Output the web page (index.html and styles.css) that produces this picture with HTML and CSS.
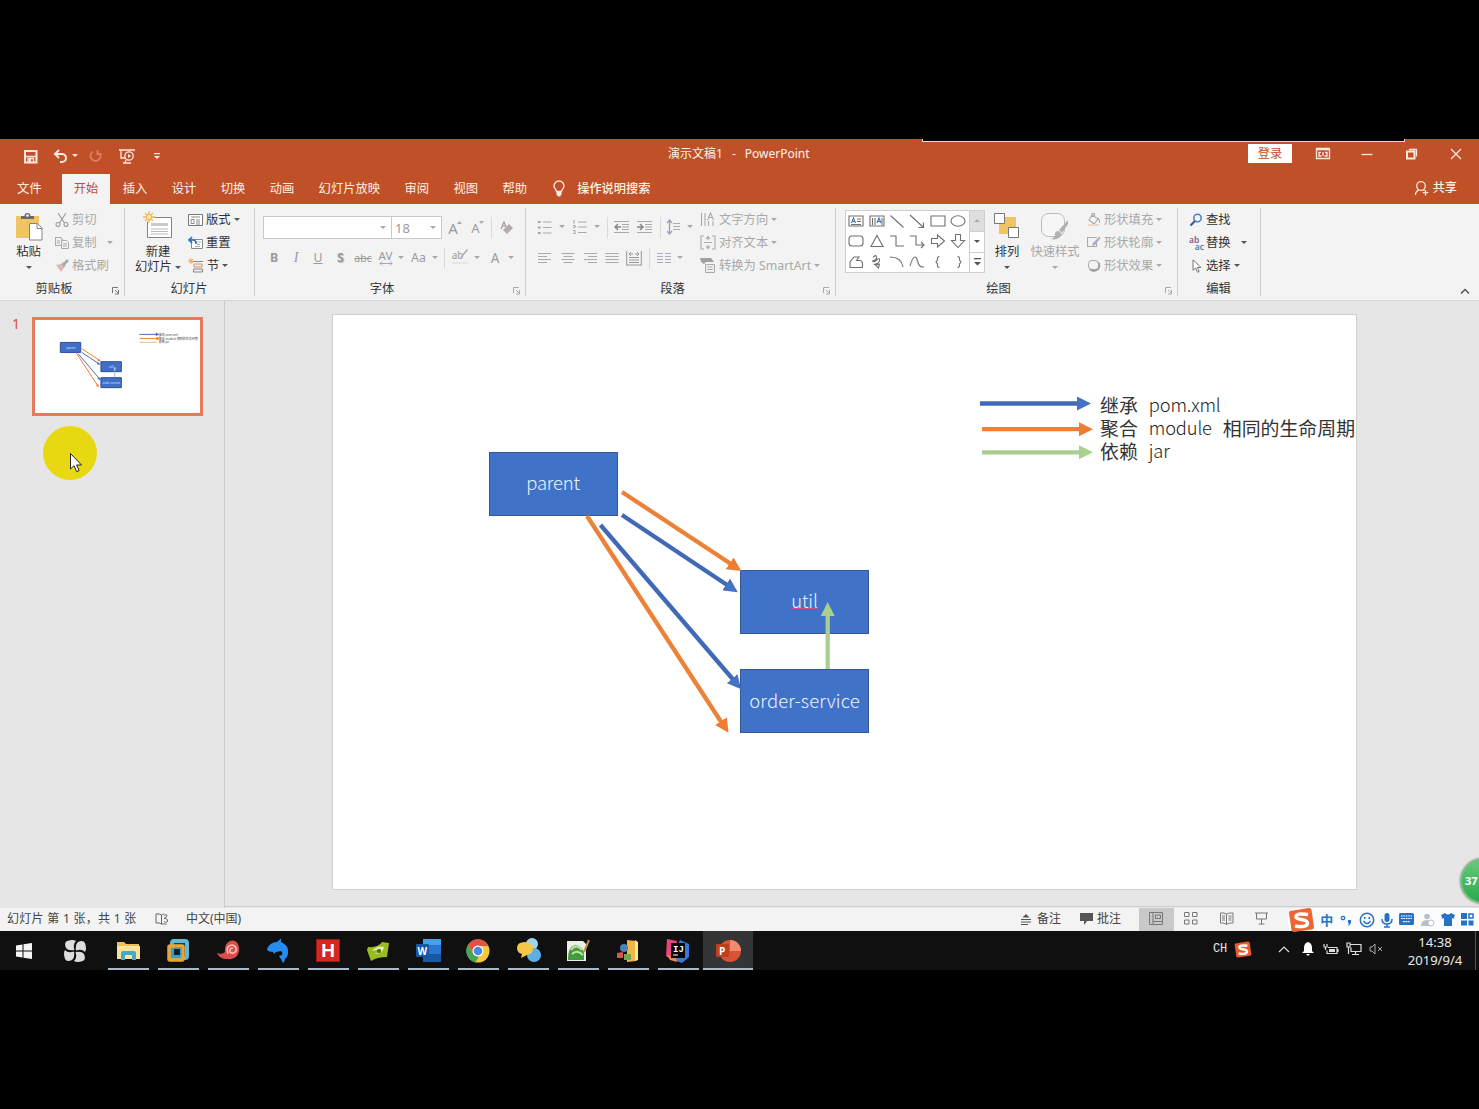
FILE: index.html
```html
<!DOCTYPE html>
<html lang="zh-CN">
<head>
<meta charset="utf-8">
<title>演示文稿1 - PowerPoint</title>
<link rel="stylesheet" href="styles.css">
</head>
<body>
<main class="screen">
<header class="titlebar">
  <div class="quick">
    <svg class="q-save" width="15" height="15" viewBox="0 0 15 15"><path d="M2 2h11.500v11.500H2z" class="tl2"/><path d="M2 7.500h11M5 13V9.500h5.500V13" class="tl"/><path d="M6 10h2v3H6z" fill="#fde9e1"/></svg>
    <svg class="q-undo" width="15" height="15" viewBox="0 0 15 15"><path d="M2 5h7a4 4 0 0 1 0 8H7M6 1L2 5l4 4" class="tl2"/></svg>
    <svg class="caret light" width="6" height="4"><path d="M0 0h6L3 3z"/></svg>
    <svg class="q-redo" width="14" height="14" viewBox="0 0 14 14"><path d="M4 2.500a5 5 0 1 0 7 2M8.500 1v4H12.500" fill="none" stroke="#dc8260" stroke-width="1.800"/></svg>
    <svg class="q-show" width="16" height="16" viewBox="0 0 16 16"><path d="M0 2h16M2 2v8h4M4 15h8M7 12l-1 3" class="tl"/><circle cx="10" cy="8" r="4.200" class="tl"/><path d="M9 6l3 2-3 2z" fill="#fde9e1"/></svg>
    <svg class="q-more" width="6" height="7"><path d="M0 0h6v1.200H0zM0 3h6L3 6z" fill="#fde9e1"/></svg>
  </div>
  <div class="doc"><span>演示文稿1</span><span>-</span><span>PowerPoint</span></div>
  <div class="window-tools">
    <span class="login">登录</span>
    <svg width="16" height="14" viewBox="0 0 16 14"><path d="M1.500 1.500h13v10h-13zM1.500 2.700h13" class="tl"/><path d="M6.500 9H4V5.500h2M9.500 9H12V5.500h-2M8 5v4" class="tl"/></svg>
    <svg width="16" height="14" viewBox="0 0 16 14"><path d="M2.500 7.500h11" class="tl"/></svg>
    <svg width="16" height="14" viewBox="0 0 16 14"><path d="M3 4.500h7.500v7H3z" class="tl2"/><path d="M5 2.500h7.500v7" class="tl"/></svg>
    <svg width="16" height="14" viewBox="0 0 16 14"><path d="M3 2l10 10M13 2L3 12" class="tl"/></svg>
  </div>
  <i class="capture-edge"></i>
</header>
<nav class="tabs">
  <span class="file">文件</span><span class="active">开始</span><span>插入</span><span>设计</span><span>切换</span><span>动画</span><span>幻灯片放映</span><span>审阅</span><span>视图</span><span>帮助</span>
  <svg class="bulb" width="14" height="18" viewBox="0 0 14 18"><path d="M4.500 11.500C4.500 9.500 2 8.500 2 6a5 5 0 0 1 10 0c0 2.500-2.500 3.500-2.500 5.500z" class="tl"/><path d="M4.500 12h5v2.500L8 16.500H6L4.500 14.500z" fill="#fde9e1"/></svg>
  <b class="search">操作说明搜索</b>
  <div class="share"><svg width="15" height="16" viewBox="0 0 15 16"><circle cx="7" cy="6" r="4.300" class="tl"/><path d="M1.500 15c0-3 1.500-4.500 3.500-5.200M9 9.800l1.500.7M11.500 10v5.500M8.700 12.700h5.600" class="tl"/></svg><b>共享</b></div>
</nav>
<section class="ribbon">
  <div class="group clipboard">
    <div class="body">
      <div class="big">
        <svg width="28" height="29" viewBox="0 0 28 29"><path d="M1 4h23v22H1z" fill="#f0c465"/><path d="M6 7V4h3.500a3 3 0 0 1 6 0H19v3z" fill="#6b6b6b"/><circle cx="12.500" cy="3.600" r="1.300" fill="#f3f3f3"/><path d="M14.500 11.500h8l4.500 4.500v12H14.500z" fill="#fff" stroke="#858585"/><path d="M22 12v4.500h5" fill="none" stroke="#858585"/></svg>
        <span>粘贴</span><svg class="caret" width="6" height="4"><path d="M0 0h6L3 3z"/></svg>
      </div>
      <div class="stack off">
        <div><svg width="14" height="14" viewBox="0 0 14 14"><path d="M3 0l6.500 10M11 0L4.500 10" class="g dk"/><circle cx="3" cy="11.500" r="2" class="g dk"/><circle cx="11" cy="11.500" r="2" class="g dk"/></svg><span>剪切</span></div>
        <div><svg width="14" height="14" viewBox="0 0 14 14"><path d="M.5 1.500h5l2 2v6h-7z" class="g"/><path d="M6.500 4.500h5l2 2v6h-7z" fill="#f3f3f3" stroke="#aaa"/><path d="M8 8h4M8 10h4M2 5h3M2 7h3" class="g"/></svg><span>复制</span><svg class="caret far" width="6" height="4"><path d="M0 0h6L3 3z"/></svg></div>
        <div><svg width="14" height="14" viewBox="0 0 14 14"><path d="M1 6l5-1 3 4-3 4z" fill="#d9b9bd"/><path d="M6 5l3-2 3-3 2 2-3 3-2 4z" fill="#aaa"/></svg><span>格式刷</span></div>
      </div>
    </div>
    <footer><span>剪贴板</span><svg class="launch dark" width="8" height="8"><path d="M.5 6V.5H6M3 3l3 3M6.500 3v4H3"/></svg></footer>
  </div>
  <div class="group slides">
    <div class="body">
      <div class="big">
        <svg width="30" height="29" viewBox="0 0 30 29"><path d="M4.500 6.500h24v20h-24z" fill="#fff" stroke="#858585"/><path d="M8 12h17v3H8z" fill="#c9c9c9"/><path d="M8 18h17M8 20.500h17M8 23h17" stroke="#bbb"/><circle cx="6" cy="6" r="5" fill="#f3f3f3"/><path d="M6 0v12M0 6h12M2 2l8 8M10 2l-8 8" stroke="#edbc50" stroke-width="1.300"/><circle cx="6" cy="6" r="2.500" fill="#fff0bd" stroke="#e8b342"/></svg>
        <span>新建</span><span class="with-caret">幻灯片<svg class="caret" width="6" height="4"><path d="M0 0h6L3 3z"/></svg></span>
      </div>
      <div class="stack">
        <div><svg width="15" height="14" viewBox="0 0 15 14"><path d="M.5 1.500h14v11H.5z" fill="#fff" stroke="#777"/><path d="M3 4h9M3 6.500h3v4H3zM8 7h4M8 9h4M8 11h4" fill="none" stroke="#888"/></svg><span>版式</span><svg class="caret" width="6" height="4"><path d="M0 0h6L3 3z"/></svg></div>
        <div><svg width="15" height="14" viewBox="0 0 15 14"><path d="M3.500 3.500h11v9h-11z" fill="#fff" stroke="#888"/><path d="M9 6h4M9 8.500h3M7 10.500h5" stroke="#aaa"/><path d="M1 4h4a3 3 0 0 1 3 3v1M4 1L1 4l3 3" fill="none" stroke="#2c72b8" stroke-width="1.700"/></svg><span>重置</span></div>
        <div><svg width="16" height="15" viewBox="0 0 16 15"><path d="M5 3.500h10" stroke="#888"/><path d="M6 6h8v3H6z" fill="#eee" stroke="#d79262"/><path d="M5.500 11h9v3h-9z" fill="#eee" stroke="#888"/><path d="M3 0v6M0 3h6M1 1l4 4M5 1L1 5" stroke="#efaa58"/></svg><span>节</span><svg class="caret" width="6" height="4"><path d="M0 0h6L3 3z"/></svg></div>
      </div>
    </div>
    <footer><span>幻灯片</span></footer>
  </div>
  <div class="group fonts">
    <div class="body col">
      <div class="font-row one">
        <div class="combo"><svg class="caret off" width="6" height="4"><path d="M0 0h6L3 3z"/></svg></div>
        <div class="combo size"><span>18</span><svg class="caret off" width="6" height="4"><path d="M0 0h6L3 3z"/></svg></div>
        <span class="grow">A<svg width="5" height="3"><path d="M0 3h5L2.500 0z"/></svg></span><span class="grow shrink">A<svg width="5" height="3"><path d="M0 0h5L2.500 3z"/></svg></span><i class="bar"></i>
        <svg width="14" height="14" viewBox="0 0 14 14"><path d="M1 8l3-7 2 5M2 5h3" class="g dk"/><path d="M3 9l6-6 4 4-6 6z" fill="#b4abae"/></svg>
      </div>
      <div class="font-row two">
        <b>B</b><em>I</em><u>U</u><b class="shadow">S</b><s>abc</s>
        <span class="av">AV<svg width="14" height="5"><path d="M1 2.500h12M3 .5l-2 2 2 2M11 .5l2 2-2 2" fill="none" stroke="#a3a7b8"/></svg></span><svg class="caret off" width="6" height="4"><path d="M0 0h6L3 3z"/></svg>
        <span>Aa</span><svg class="caret off" width="6" height="4"><path d="M0 0h6L3 3z"/></svg><i class="bar"></i>
        <span class="mark">ab<svg width="9" height="10"><path d="M8 0L3 6 1 9l3-2 5-6z" fill="#aaa"/></svg></span><svg class="caret off" width="6" height="4"><path d="M0 0h6L3 3z"/></svg><span class="color">A</span><svg class="caret off" width="6" height="4"><path d="M0 0h6L3 3z"/></svg>
      </div>
    </div>
    <footer><span>字体</span><svg class="launch" width="8" height="8"><path d="M.5 6V.5H6M3 3l3 3M6.500 3v4H3"/></svg></footer>
  </div>
  <div class="group para">
    <div class="body">
      <div class="para-tools">
        <div class="p-row one">
          <svg width="14" height="14"><path d="M5 2h8.500M5 7.500h8.500M5 13h8.500" class="g"/><path d="M0 1h2.500v2H0zM0 6.500h2.500v2H0zM0 12h2.500v2H0z" fill="#9aa2ba"/></svg><svg class="caret off" width="6" height="4"><path d="M0 0h6L3 3z"/></svg>
          <svg width="14" height="16"><path d="M5 3h8.500M5 8h8.500M5 13.500h8.500M1 1v3.500M0 6.500h2v2H0M0 11.500h2v3H0" class="g"/></svg><svg class="caret off" width="6" height="4"><path d="M0 0h6L3 3z"/></svg><i class="bar"></i>
          <svg width="15" height="14"><path d="M0 1.500h15M8 4.500h7M8 7h7M8 9.500h7M0 12.500h15" class="g"/><path d="M7 7H1M4 4L1 7l3 3" fill="none" stroke="#888" stroke-width="1.500"/></svg>
          <svg width="15" height="14"><path d="M0 1.500h15M8 4.500h7M8 7h7M8 9.500h7M0 12.500h15" class="g"/><path d="M0 7h6M3 4l3 3-3 3" fill="none" stroke="#888" stroke-width="1.500"/></svg><i class="bar"></i>
          <svg width="14" height="16"><path d="M6 4.500h7M6 7.500h7M6 10.500h7" class="g"/><path d="M2.500 1v14M0 4l2.500-3L5 4M0 12l2.500 3L5 12" fill="none" stroke="#9aa0b5" stroke-width="1.300"/></svg><svg class="caret off" width="6" height="4"><path d="M0 0h6L3 3z"/></svg>
        </div>
        <div class="p-row two">
          <svg width="14" height="12"><path d="M0 1.500h13M0 4.500h9M0 7.500h13M0 10.500h9" class="g"/></svg><svg width="14" height="12"><path d="M.5 1.500h13M2.500 4.500h9M.5 7.500h13M2.500 10.500h9" class="g"/></svg><svg width="14" height="12"><path d="M1 1.500h13M5 4.500h9M1 7.500h13M5 10.500h9" class="g"/></svg><svg width="14" height="12"><path d="M.5 1.500h13M.5 4.500h13M.5 7.500h13M.5 10.500h13" class="g"/></svg>
          <svg width="16" height="15"><path d="M.7 0v14M15.300 0v14M0 14h16M3 6.500h10M3 9h10M3 11.500h10M3 3h4M5 1L3 3l2 2M13 3H9M11 1l2 2-2 2" fill="none" stroke="#999"/></svg><i class="bar"></i>
          <svg width="14" height="12"><path d="M0 1.500h6M8 1.500h6M0 4.500h6M8 4.500h6M0 7.500h6M8 7.500h6M0 10.500h6M8 10.500h6" fill="none" stroke="#a5abc0"/></svg><svg class="caret off" width="6" height="4"><path d="M0 0h6L3 3z"/></svg>
        </div>
      </div>
      <div class="stack off">
        <div><svg width="16" height="15" viewBox="0 0 16 15"><path d="M1.500 1v13M5 1v13M8.500 9v5M13 9v5M7.500 8L10.500 1l3 7M9 5.500h3.500" class="g"/></svg><span>文字方向</span><svg class="caret" width="6" height="4"><path d="M0 0h6L3 3z"/></svg></div>
        <div><svg width="16" height="15" viewBox="0 0 16 15"><path d="M4 1H1v13h3M12 1h3v13h-3M4 7.500h8M8 2v3M8 10v3M6 4l2-2.500L10 4M6 11l2 2.500L10 11" class="g"/></svg><span>对齐文本</span><svg class="caret" width="6" height="4"><path d="M0 0h6L3 3z"/></svg></div>
        <div><svg width="16" height="15" viewBox="0 0 16 15"><path d="M0 0h11l3 4H6L4 6 1 4z" fill="#a0a0a0"/><path d="M5.500 6.500h9v8h-9zM7.500 9h5M7.500 11.500h5" fill="#eee" stroke="#aaa"/></svg><span>转换为 SmartArt</span><svg class="caret" width="6" height="4"><path d="M0 0h6L3 3z"/></svg></div>
      </div>
    </div>
    <footer><span>段落</span><svg class="launch" width="8" height="8"><path d="M.5 6V.5H6M3 3l3 3M6.500 3v4H3"/></svg></footer>
  </div>
  <div class="group drawing">
    <div class="body">
      <div class="gallery">
        <div class="shapes">
          <svg viewBox="0 0 16 16"><path d="M1 3h14v10H1z"/><path d="M3.500 10l2-5 2 5M4.300 8.500h2.500" stroke="#4770b5"/><path d="M9 6h4M9 8.500h4M3 11.500h10"/></svg>
          <svg viewBox="0 0 16 16"><path d="M1 3h14v10H1z"/><path d="M8 10l2-5 2 5M8.800 8.500h2.500" stroke="#4770b5"/><path d="M3.500 5v7M6 5v7M13 5v7"/></svg>
          <svg viewBox="0 0 16 16"><path d="M1.500 2.500l13 12"/></svg>
          <svg viewBox="0 0 16 16"><path d="M1 2l13 12M14.500 9.500V14.500H9.500"/></svg>
          <svg viewBox="0 0 16 16"><path d="M1 3h14v10H1z"/></svg>
          <svg viewBox="0 0 16 16"><ellipse cx="8" cy="8" rx="7" ry="5.200"/></svg>
          <svg viewBox="0 0 16 16"><rect x="1" y="3" width="14" height="10" rx="3"/></svg>
          <svg viewBox="0 0 16 16"><path d="M8 2.500L14 13.500H2z"/></svg>
          <svg viewBox="0 0 16 16"><path d="M1 3h6v10h8"/></svg>
          <svg viewBox="0 0 16 16"><path d="M1 3h6v9h8M12 9l3 3-3 3"/></svg>
          <svg viewBox="0 0 16 16"><path d="M1.500 5.500h6V2L14.500 8l-7 6v-3.500h-6z"/></svg>
          <svg viewBox="0 0 16 16"><path d="M5.500 1.500h5v6h4L8 14.500 1.500 7.500h4z"/></svg>
          <svg viewBox="0 0 16 16"><path d="M2 13.500V8l4-5h5L8.500 6.500h3a3 3 0 0 1 3 3v4z"/></svg>
          <svg viewBox="0 0 16 16"><path d="M4 3.500Q7 0 7.500 3T3.500 7q1 2 4-1t3 0-4 4 4 0M10.500 10l-4 1 3 3z"/></svg>
          <svg viewBox="0 0 16 16"><path d="M1 3c8 0 12 4 13 10"/></svg>
          <svg viewBox="0 0 16 16"><path d="M1 12C4 1 7 1 8.500 7S12 13 15 13"/></svg>
          <svg viewBox="0 0 16 16"><path d="M9.500 2.500Q7 2.500 7.500 6L6 8l1.500 2Q7 13.500 9.500 13.500"/></svg>
          <svg viewBox="0 0 16 16"><path d="M7.500 2.500Q10 2.500 9.500 6L11 8 9.500 10Q10 13.500 7.500 13.500"/></svg>
        </div>
        <div class="scroll"><span><svg class="caret off" width="6" height="4"><path d="M0 3h6L3 0z"/></svg></span><span><svg class="caret" width="6" height="4"><path d="M0 0h6L3 3z"/></svg></span><span><svg width="7" height="8"><path d="M0 0h7v1.300H0zM0 4h7L3.500 7.500z" fill="#555"/></svg></span></div>
      </div>
      <div class="big arrange"><svg width="28" height="29" viewBox="0 0 28 29"><path d="M6 5h17v17H6z" fill="#f0c465"/><path d="M1.500 1.500h10v10h-10zM15.500 15.500h10v10h-10z" fill="#fff" stroke="#777"/></svg><span>排列</span><svg class="caret" width="6" height="4"><path d="M0 0h6L3 3z"/></svg></div>
      <div class="big styles off"><svg width="30" height="29" viewBox="0 0 30 29"><rect x="1.500" y="1.500" width="23" height="23" rx="7" fill="#f6f6f6" stroke="#bbb"/><path d="M28 8l-9 10 3 3 6-9zM19 19q-5 0-4 5-1 2-4 3 8 2 11-5z" fill="#b2b2b2"/></svg><span>快速样式</span><svg class="caret" width="6" height="4"><path d="M0 0h6L3 3z"/></svg></div>
      <div class="stack off">
        <div><svg width="14" height="15" viewBox="0 0 14 15"><path d="M5 3l6 4-4 5-5-4zM5 5V1.500h2.500V4M11 6q2 2 1.500 5" class="g"/><path d="M1 13h11" stroke="#ead8ca" stroke-width="2"/></svg><span>形状填充</span><svg class="caret" width="6" height="4"><path d="M0 0h6L3 3z"/></svg></div>
        <div><svg width="14" height="15" viewBox="0 0 14 15"><path d="M10 2.500H.5v9h9V8" class="g"/><path d="M12.500 1.500L6 8l-1 3 3-1 5.500-7z" fill="#a5adc4"/></svg><span>形状轮廓</span><svg class="caret" width="6" height="4"><path d="M0 0h6L3 3z"/></svg></div>
        <div><svg width="14" height="15" viewBox="0 0 14 15"><path d="M2 11q2 4 8 2 4-2 3-8l-2-1v7z" fill="#999"/><rect x="1.500" y="2.500" width="10" height="9" rx="3.500" fill="#f4f4f4" stroke="#aaa"/></svg><span>形状效果</span><svg class="caret" width="6" height="4"><path d="M0 0h6L3 3z"/></svg></div>
      </div>
    </div>
    <footer><span>绘图</span><svg class="launch" width="8" height="8"><path d="M.5 6V.5H6M3 3l3 3M6.500 3v4H3"/></svg></footer>
  </div>
  <div class="group edit">
    <div class="body"><div class="stack">
      <div><svg width="14" height="14" viewBox="0 0 14 14"><circle cx="8.500" cy="5" r="3.700" fill="none" stroke="#4b7fc0" stroke-width="1.500"/><path d="M6 8l-4.500 4.500" stroke="#35598f" stroke-width="2"/></svg><span>查找</span></div>
      <div><span class="abac"><i>ab</i><i>ac</i></span><span>替换</span><svg class="caret" width="6" height="4"><path d="M0 0h6L3 3z"/></svg></div>
      <div><svg width="14" height="14" viewBox="0 0 14 14"><path d="M4 .8v10.500l2.500-2.300 2 4.300 1.700-.8-2-4H12z" fill="#fff" stroke="#777"/></svg><span>选择</span><svg class="caret" width="6" height="4"><path d="M0 0h6L3 3z"/></svg></div>
    </div></div>
    <footer><span>编辑</span></footer>
  </div>
  <svg class="collapse" width="10" height="6"><path d="M1 5.500L5 1.500l4 4" fill="none" stroke="#555" stroke-width="1.500"/></svg>
</section>
<section class="workspace">
  <aside class="thumbs">
    <span class="number">1</span>
    <svg class="thumb" viewBox="0 0 1024 576" preserveAspectRatio="none">
      <path d="M0 0h1024v576H0z" fill="#fff"/>
      <g fill="#3f6fc6" stroke="#2b4f95" stroke-width="6"><path d="M157 139h127v62H157zM409 258h127v62H409zM409 357h127v62H409z"/></g>
      <g fill="none" stroke-width="6"><path d="M291 201l112 74M269 210l138 162M648 89h105" stroke="#4169b5"/><path d="M291 178l115 76M255 202l140 213M650 115h106" stroke="#ed7d31"/><path d="M495 355v-62" stroke="#9fb7d6"/><path d="M650 138h106" stroke="#d8c47a"/></g>
      <g fill="#4169b5"><path d="M750 77l20 12-20 12zM403 277l-20-3 9-14zM407 373l-20-9 14-9z"/></g><path d="M408 257l-20-3 9-14zM396 417l-18-12 14-9zM754 103l20 12-20 12z" fill="#ed7d31"/><path d="M495 290l8 16h-16z" fill="#b9cce6"/>
      <g class="mini-text"><text x="195" y="177">parent</text><text x="460" y="296">util</text><text x="418" y="395">order-service</text></g>
      <g class="mini-legend"><text x="768" y="97">继承  pom.xml</text><text x="768" y="121">聚合  module  相同的生命周期</text><text x="768" y="144">依赖  jar</text></g>
    </svg>
    <i class="halo"></i>
    <svg class="pointer" width="14" height="21" viewBox="0 0 14 21"><path d="M1.500 1.500v15.500l3.500-3.300 2.700 6 2.500-1.200-2.700-5.500h5z" fill="#fff" stroke="#222"/></svg>
  </aside>
  <div class="stage">
    <div class="slide">
      <div class="node parent">parent</div><div class="node util"><span>util</span></div><div class="node order">order-service</div>
      <svg class="arrows" width="1023" height="574" viewBox="0 0 1023 574">
        <defs>
          <marker id="mb" markerUnits="userSpaceOnUse" markerWidth="14" markerHeight="14" refX="13" refY="7" orient="auto"><path d="M0 0l14 7-14 7z" fill="#4472c4"/></marker>
          <marker id="mo" markerUnits="userSpaceOnUse" markerWidth="14" markerHeight="14" refX="13" refY="7" orient="auto"><path d="M0 0l14 7-14 7z" fill="#ee7d31"/></marker>
          <marker id="mg" markerUnits="userSpaceOnUse" markerWidth="14" markerHeight="14" refX="13" refY="7" orient="auto"><path d="M0 0l14 7-14 7z" fill="#a9d18e"/></marker>
        </defs>
        <g fill="none" stroke-width="4.300">
          <g stroke="#4169b5"><path d="M289 200l107 71.300"/><path d="M267.500 210l133 155"/><path d="M647 88.500h101"/></g>
          <g stroke="#ed8137"><path d="M289 177l109 72"/><path d="M254 201l135.500 208"/><path d="M649 114.200h101"/></g>
          <g stroke="#a9cf90"><path d="M494.700 354v-54"/><path d="M649 137.300h101"/></g>
        </g>
        <g fill="none" stroke="none">
          <g><path d="M289 200l115 76.700" marker-end="url(#mb)"/><path d="M267.500 210l140 163.500" marker-end="url(#mb)"/><path d="M647 88.500h110" marker-end="url(#mb)"/></g>
          <g><path d="M289 177l118.500 78.500" marker-end="url(#mo)"/><path d="M254 201l141 216" marker-end="url(#mo)"/><path d="M649 114.200h110" marker-end="url(#mo)"/></g>
          <g><path d="M494.700 354v-66" marker-end="url(#mg)"/><path d="M649 137.300h110" marker-end="url(#mg)"/></g>
        </g>
      </svg>
      <div class="legend"><div><span>继承</span><span class="en">pom.xml</span></div><div><span>聚合</span><span class="en">module</span><span>相同的生命周期</span></div><div><span>依赖</span><span class="en">jar</span></div></div>
    </div>
  </div>
  <div class="ball">37</div>
</section>
<footer class="status">
  <span class="count">幻灯片 第 1 张，共 1 张</span>
  <svg class="book" width="14" height="12" viewBox="0 0 14 12"><path d="M6.500 2Q4 .3 1 1v9q3-.7 5.500 1zM6.500 2Q8 1 9 1M6.500 11h5M9 2.500q3-2 3 0T9 5.500q4 0 3.500 2.500T9 8.500" fill="none" stroke="#666"/></svg>
  <span class="lang">中文(中国)</span>
  <div class="status-right">
    <svg width="12" height="12"><path d="M1 6.500h10M1 9h10M1 11.500h7" stroke="#555"/><path d="M2.500 4.500L6 1l3.500 3.500z" fill="#555"/></svg><span>备注</span>
    <svg class="note" width="13" height="12"><path d="M0 0h13v8H7l-3 4V8H0z" fill="#555"/></svg><span>批注</span>
    <div class="view on"><svg width="14" height="13"><path d="M.5.500h13v12H.5zM4 .5v12M4 9.500h9.500M6.500 3h5v3.500h-5z" class="s"/></svg></div>
    <div class="view"><svg width="14" height="13"><path d="M.5.500h4.500v4H.5zM8.500.500H13v4H8.500zM.5 8h4.500v4H.5zM8.500 8H13v4H8.500z" class="s"/></svg></div>
    <div class="view"><svg width="14" height="13"><path d="M6.500 2Q4 .5.500 1v10q3.500-.5 6 1.500Q9 10.500 13 11V1Q9 .5 6.500 2v10M2 4h3M2 6h3M2 8h3M8.500 4h3M8.500 6h3M8.500 8h3" class="s"/></svg></div>
    <div class="view"><svg width="14" height="13"><path d="M0 1h13M1.500 1v6h10V1M6.500 7v5M3.500 12h6" class="s"/></svg></div>
  </div>
  <div class="ime">
    <svg width="27" height="26" viewBox="0 0 27 26"><path d="M2 4L21 1q2 0 2.500 2L26 20q0 2-2 2.500L6 25q-2 0-2.500-2L1 6q0-1.500 1-2z" fill="#ec6633"/><path d="M20 7.500Q8 5.500 8 10c0 3.500 11.500 1.500 11.500 6 0 4-6.500 4-12.500 3" fill="none" stroke="#fff" stroke-width="3.500"/></svg>
    <b>中</b>
    <svg width="13" height="14"><circle cx="3" cy="5" r="1.700" fill="none" stroke="#2672c7" stroke-width="1.300"/><path d="M8 7h3v3l-2 2.500H8L9 10H8z" fill="#2672c7"/></svg>
    <svg width="16" height="16"><circle cx="8" cy="8" r="6.700" class="i"/><path d="M4.500 9q3.500 5 7 0" class="i"/><path d="M5 5h1.500v2H5zM9.500 5H11v2H9.500z" fill="#2672c7"/></svg>
    <svg width="12" height="16"><rect x="3.500" y="1" width="5" height="9" rx="2.500" fill="#2672c7"/><path d="M1 7q0 5 5 5t5-5M6 12v3M3 15h6" class="i"/></svg>
    <svg width="15" height="13"><rect width="15" height="12" rx="1.500" fill="#2672c7"/><path d="M2 3h11M2 5.500h11M4 8.700h7" stroke="#fff" stroke-width="1.200" stroke-dasharray="1.700 .7"/></svg>
    <svg width="14" height="14"><circle cx="6" cy="3.500" r="2.800" fill="#b9bfcd"/><path d="M0 13q0-6 6-6 3 0 4 2v4z" fill="#b9bfcd"/><circle cx="10" cy="10" r="3" fill="#fff" stroke="#b9bfcd"/></svg>
    <svg width="14" height="14"><path d="M0 2l4-2q3 3 6 0l4 2-1.500 4L11 5v8H3V5L1.500 6z" fill="#2672c7"/></svg>
    <svg width="13" height="13"><path d="M0 0h6v6H0zM0 7.500h6v5H0zM7.500 7.500h5v5h-5z" fill="#2672c7"/><path d="M8 1h4v4H8z" class="i"/></svg>
  </div>
</footer>
<section class="taskbar">
  <div class="app start"><svg width="16" height="16"><path d="M0 2.500l6.500-1V7.500H0zM7.500 1.300L16 0v7.500H7.500zM0 8.500h6.500v6L0 13.500zM7.500 8.500H16V16l-8.500-1.300z" fill="#f5f5f5"/></svg></div>
  <div class="app pin"><svg width="22" height="22" viewBox="0 0 22 22"><g fill="#ddd"><path d="M10.500 10Q4 11 2 8-.5 2 4 .7q5-1.500 8 .3Q8.500 4 10.500 10z"/><path d="M12 10.500Q11 4 14 2q6-2.500 7.300 2 1.500 5-.3 8Q18 8.500 12 10.500z"/><path d="M11.500 12Q18 11 20 14q2.500 6-2 7.300-5 1.500-8-.3Q13.500 18 11.500 12z"/><path d="M10 11.500Q11 18 8 20q-6 2.500-7.300-2-1.500-5 .3-8Q4 13.500 10 11.500z"/></g></svg></div>
  <div class="app run"><svg width="23" height="20" viewBox="0 0 23 20"><path d="M0 1h7l2 2h13v15H0z" fill="#e9bf59"/><path d="M0 5h23v13H0z" fill="#fae29c"/><path d="M4 19v-7q0-2 2-2h11q2 0 2 2v7h-4v-5H8v5z" fill="#49a6c9"/></svg></div>
  <div class="app run"><svg width="24" height="24" viewBox="0 0 24 24"><rect x="6" y="2" width="15" height="17" rx="2" fill="#173c4b" stroke="#62b9d4" stroke-width="4"/><rect x="3" y="7" width="14" height="14" rx="1" fill="none" stroke="#eca52d" stroke-width="3.500"/><path d="M5 9h10v10H5z" fill="#3a9fc0"/><path d="M8 10h6v6H8z" fill="#10202a"/></svg></div>
  <div class="app run"><svg width="24" height="22" viewBox="0 0 24 22"><path d="M1 13q5 2 8-1-1-8 5-11 7-2 9 6c1 9-5 13-12 12-5 0-8-2-10-6z" fill="#d94d4b"/><path d="M12 14q-3-8 4-9 5 1 4 6-3 4-6 1-1-4 3-4" fill="none" stroke="#ffc3b7" stroke-width="1.600"/></svg></div>
  <div class="app run"><svg width="24" height="25" viewBox="0 0 24 25"><path d="M1 11Q4 4 11 4l4-3.500V4q8 3 7 12-1 4-3 5 0 2-2 4l-2-4-2-3 3-1q1-3-1-4l-5 1-2 2-1-2q-4 0-6-2z" fill="#258df1"/></svg></div>
  <div class="app run"><span class="h-app">H</span></div>
  <div class="app run"><svg width="23" height="20" viewBox="0 0 23 20"><path d="M1 6q10 1 14-5l7 1-2 14q-10 0-16 4L0 9z" fill="#99bd20"/><path d="M5 10q5-6 12-4-1 7-10 7 5-1 7-5" fill="#e2efad"/><circle cx="12" cy="10" r="2" fill="#486b11"/></svg></div>
  <div class="app run"><svg width="25" height="23" viewBox="0 0 25 23"><path d="M7 0h18v23H7z" fill="#2a75ce"/><path d="M7 0h18v6H7z" fill="#43a2e8"/><path d="M7 15h18v8H7z" fill="#1956a6"/><rect y="5" width="13" height="13" rx="1" fill="#1857a9"/><text x="1.500" y="15.500" class="office">W</text></svg></div>
  <div class="app run"><svg width="24" height="24" viewBox="0 0 24 24"><circle cx="12" cy="12" r="11.500" fill="#f4c83b"/><path d="M2 6A11.500 11.500 0 0 1 22.500 7H12l-5 7z" fill="#e05244"/><path d="M2 6l6 10 5 1-3.500 6.300A11.500 11.500 0 0 1 2 6z" fill="#45a55a"/><circle cx="12" cy="12" r="5.500" fill="#fff"/><circle cx="12" cy="12" r="4.300" fill="#4b87de"/></svg></div>
  <div class="app run"><svg width="25" height="25" viewBox="0 0 25 25"><circle cx="16" cy="6" r="6" fill="#9dd5ee"/><circle cx="18" cy="17" r="7" fill="#5cb0e7"/><path d="M1 10q0-6 8-6t8 6-6 7l-6 3 1-4q-5-1-5-6z" fill="#f3c749"/></svg></div>
  <div class="app run"><svg width="24" height="24" viewBox="0 0 24 24"><path d="M1 2h16l3 3v17H1z" fill="#eaf0e5"/><path d="M2 20q0-13 8-14 7 2 8 8v7H2z" fill="#439b3e"/><path d="M5 11q5-7 11 0M6 15q5-5 11 1" fill="none" stroke="#bfe3a1" stroke-width="2"/><path d="M23 1l-5 12" stroke="#c98f46" stroke-width="2"/></svg></div>
  <div class="app run"><svg width="24" height="24" viewBox="0 0 24 24"><path d="M11 1l9 1v20l-9 1z" fill="#efb547"/><path d="M19 1l3 2v18l-3 1z" fill="#fbe799"/><circle cx="8" cy="9" r="4" fill="#4d82b8"/><path d="M1 14l6-1v6H1z" fill="#d05b4d"/><path d="M8 15h7v6H8z" fill="#6eaa51"/></svg></div>
  <div class="app run"><svg width="25" height="25" viewBox="0 0 25 25"><path d="M1 1l10 2-3 20-8-5z" fill="#e74679"/><path d="M14 2l9 4v13l-7 6-11-4z" fill="#3978df"/><path d="M1 17l9 2 1 5-7-2z" fill="#ed854a"/><path d="M5 5h14v15H5z" fill="#080808"/><text x="7" y="14" class="ij">IJ</text><path d="M7 17h5" stroke="#fff"/></svg></div>
  <div class="app run current"><svg width="25" height="24" viewBox="0 0 25 24"><circle cx="14" cy="12" r="11" fill="#d95332"/><path d="M14 1a11 11 0 0 1 11 11H14z" fill="#f08b6d"/><rect y="5" width="13" height="13" rx="1" fill="#bd3e20"/><text x="3" y="15.500" class="office">P</text></svg></div>
  <div class="tray">
    <span class="ch">CH</span><svg width="18" height="19" viewBox="0 0 27 26"><path d="M2 4L21 1q2 0 2.500 2L26 20q0 2-2 2.500L6 25q-2 0-2.500-2L1 6q0-1.500 1-2z" fill="#ec5b27"/><path d="M20 7.500Q8 5.500 8 10c0 3.500 11.500 1.500 11.500 6 0 4-6.500 4-12.500 3" fill="none" stroke="#fff" stroke-width="3.700"/></svg>
    <svg class="up" width="12" height="8"><path d="M1 7l5-5 5 5" class="w"/></svg>
    <svg class="bell" width="12" height="14"><path d="M6 0Q10 1 10 6v3l2 2H0l2-2V6Q2 1 6 0zM4 12h4l-2 2z" fill="#fff"/></svg>
    <svg class="battery" width="16" height="13"><path d="M5 4.500h9v6H4v-3M15 6v3M1 1v3h3V1M2.500 4v3" class="w"/><path d="M6 6h6v3H6z" fill="#ddd"/></svg>
    <svg class="net" width="16" height="14"><path d="M4 2.500h11v7H5v-4M6 12.500h7M9.500 10v2M1 1v4h3V1zM2.500 5v7" class="w"/></svg>
    <svg class="mute" width="15" height="12"><path d="M1 4h2l3-3v10L3 8H1zM9 4l4 4M13 4L9 8" fill="none" stroke="#aaa"/></svg>
    <div class="clock"><span>14:38</span><span>2019/9/4</span></div><i class="peek"></i>
  </div>
</section>
</main>
</body>
</html>
```
FILE: styles.css
```css
* { box-sizing: border-box; }
body { margin: 0; background: #000; }
svg { display: block; flex: none; }
i { font-style: normal; }
.screen { width: 1479px; height: 1109px; padding-top: 139px; overflow: hidden; background: #000; font: 12.3px/16px "Noto Sans", "Noto Sans CJK SC", sans-serif; color: #333; }
.tl { fill: none; stroke: #fde9e1; stroke-width: 1.3; }
.tl2 { fill: none; stroke: #fde9e1; stroke-width: 2; }
.g { fill: none; stroke: #aaa; stroke-width: 1.1; }
.g.dk { stroke: #999; }
.s { fill: none; stroke: #777; }
.i { fill: none; stroke: #2672c7; stroke-width: 1.5; }
.w { fill: none; stroke: #ddd; stroke-width: 1.2; }
.caret { fill: #555; }
.caret.light { fill: #fde9e1; }
.caret.off, .off .caret { fill: #aaa; }

.titlebar { position: relative; display: grid; grid-template-columns: 668px 1fr 231px; height: 34px; background: #c05028; color: #fff0e9; }
.quick { display: flex; align-items: center; padding-left: 23px; }
.q-undo { margin-left: 15px; }
.quick .light { margin-left: 4px; }
.q-redo { margin-left: 11px; }
.q-show { margin-left: 16px; }
.q-more { margin-left: 19px; }
.doc { display: flex; gap: 9px; padding-top: 7px; font-size: 12px; }
.window-tools { display: flex; align-items: flex-start; gap: 28.500px; padding-top: 8px; }
.login { width: 44px; height: 19px; margin: -3px -6px 0 0; background: #fff; color: #c05028; text-align: center; line-height: 19px; }
.capture-edge { position: absolute; left: 922px; top: 0; width: 483px; height: 3px; background: #000; border: solid #ddd; border-width: 0 1px 1px; }

.tabs { display: flex; height: 31px; background: #c05028; color: #fff0e9; line-height: 31px; }
.tabs > span { padding: 0 12.200px; }
.tabs > .file { width: 61.500px; padding-left: 17px; }
.tabs > .active { background: #f3f3f3; color: #c05028; height: 31px; margin-top: 1px; line-height: 29px; }
.bulb { margin: 7px 11px 0 13px; }
.tabs b { font-weight: 500; font-size: 12.200px; }
.share { display: flex; gap: 4px; margin-left: auto; padding-right: 22px; line-height: 29px; }
.share svg { margin-top: 7px; }

.ribbon { display: flex; height: 97px; background: #f3f3f3; border-bottom: 1px solid #d6d6d6; }
.group { position: relative; display: flex; flex-direction: column; flex: none; }
.group::after { content: ""; align-self: flex-end; width: 1px; height: 88px; margin: -93px 0 0; background: #cfcfcf; }
.clipboard { width: 125px; }
.slides { width: 130px; }
.fonts { width: 271px; }
.para { width: 310px; }
.drawing { width: 342px; }
.edit { width: 83px; }
.body { display: flex; height: 73px; padding-top: 4px; flex: none; }
.body.col { flex-direction: column; }
.group > footer { display: flex; height: 24px; flex: none; line-height: 24px; }
.group > footer span { flex: 1; text-align: center; padding-right: 4px; }
.group.slides > footer span, .group.edit > footer span { padding-right: 2px; }
.launch { margin: 10px 5px 0 0; fill: none; stroke: #aaa; }
.launch.dark { stroke: #777; }
.big { display: flex; flex-direction: column; align-items: center; padding-top: 4px; }
.big > svg:first-child { margin-bottom: 3px; }
.big .caret { margin-top: 6px; }
.clipboard .big { width: 46px; margin-left: 6px; padding-right: 1px; }
.slides .big { width: 60px; padding-top: 3px; margin-left: 3px; }
.slides .big svg + span { margin: 1px 0 -1px; }
.with-caret { display: flex; gap: 3px; width: 46px; }
.with-caret .caret { margin-top: 7px; }
.stack > div { display: flex; align-items: center; height: 23px; white-space: nowrap; }
.stack > div > svg:first-child { margin-right: 3px; }
.stack .caret { margin-left: 3px; }
.off { color: #a9a9a9; }
.clipboard .stack { margin-left: 3px; }
.clipboard .stack .far { margin-left: 10px; }
.font-row { display: grid; align-items: center; justify-items: center; color: #9b9b9b; }
.font-row.one { height: 22px; margin: 8px 0 0 8px; grid-template-columns: 129px 50px 26px 19px 9px 21px; }
.combo { display: flex; align-items: center; justify-content: flex-end; width: 100%; height: 23px; padding-right: 5px; background: #fff; border: 1px solid #c9c9c9; }
.combo.size { justify-content: space-between; padding-left: 3px; border-left: 0; font-size: 13px; }
.grow { display: flex; font-size: 15px; }
.grow svg { fill: #aaa; margin-top: 1px; margin-left: -1px; }
.shrink { font-size: 13px; }
.bar { width: 1px; height: 21px; background: #dadada; }
.font-row.two { height: 30px; margin: 5px 0 0 8px; grid-template-columns: 22px 22px 22px 23px 22px 23px 8px 27px 5px 15px 16px 18px 18px 14px; }
.two em { font-family: "Liberation Serif", serif; font-size: 14px; }
.two s { font-size: 10.500px; }
.two .shadow { text-shadow: 1px 1px 1px #bbb; }
.av { display: flex; flex-direction: column; align-items: center; font-size: 11.500px; line-height: 11px; }
.mark { display: flex; font-size: 10px; margin-top: -4px; border-bottom: 2px solid #e6e6e6; line-height: 13px; }
.mark svg { margin-left: -4px; }
.color { font-size: 13.500px; }
.para-tools { width: 160px; margin-left: 10px; }
.p-row { display: grid; align-items: center; justify-items: center; }
.p-row.one { height: 22px; margin-top: 8px; grid-template-columns: 18px 16px 19px 16px 5px 23px 23px 8px 20px 12px; }
.p-row.two { height: 30px; margin-top: 5px; grid-template-columns: 18px 27px 18px 25px 20px 11px 18px 14px; }
.para .stack { margin-left: 4px; }
.gallery { display: flex; width: 140px; height: 63px; margin: 2px 0 0 9px; border: 1px solid #cfcfcf; background: #fff; }
.shapes { display: grid; grid-template-columns: repeat(6, 20.400px); grid-template-rows: repeat(3, 20.300px); width: 123px; place-items: center; }
.shapes svg { width: 16px; height: 16px; fill: none; stroke: #707070; stroke-width: 1.1; }
.scroll { display: grid; grid-template-rows: repeat(3, 1fr); width: 15px; flex: 1; border-left: 1px solid #cfcfcf; }
.scroll span { display: grid; place-items: center; border-top: 1px solid #cfcfcf; }
.scroll span:first-child { border: 0; background: #dedede; }
.arrange { width: 44px; }
.styles { width: 52px; white-space: nowrap; }
.drawing .stack { margin-left: 6px; }
.edit .stack { margin-left: 11px; }
.edit .stack > div:nth-child(2) .caret { margin-left: 10px; }
.abac { display: flex; flex-direction: column; width: 15px; font-size: 8.500px; line-height: 7px; font-weight: 600; color: #83618e; margin-right: 2px; }
.abac i + i { align-self: flex-end; color: #5679a6; }
.collapse { margin: 84px 9px 0 auto; }

.workspace { position: relative; display: flex; height: 607px; background: #e6e6e6; }
.thumbs { position: relative; display: flex; align-items: flex-start; width: 225px; padding: 16px 0 0 12px; border-right: 1px solid #cbcbcb; }
.number { width: 20px; color: #cc5637; font-size: 14px; line-height: 14px; }
.thumb { width: 171px; height: 99px; border: 3px solid #e77a5b; background: #fff; }
.mini-text { font-size: 18px; fill: #d9e5fb; }
.mini-legend { font-size: 18.500px; fill: #444; white-space: pre; }
.halo { position: absolute; left: 43px; top: 125px; width: 54px; height: 54px; border-radius: 50%; background: #e7d811; }
.pointer { position: absolute; left: 69px; top: 151px; }
.stage { padding: 13px 0 0 107px; border-bottom: 1px solid #cecece; height: 606px; flex: 1; }
.slide { position: relative; width: 1025px; height: 576px; background: #fff; border: 1px solid #d0d0d0; }
.node { position: absolute; display: flex; align-items: center; justify-content: center; width: 129px; height: 64px; padding-bottom: 3px; background: #4072c8; border: 1px solid #345797; color: #edf4ff; font-size: 18.500px; font-family: "Noto Sans CJK SC", sans-serif; font-weight: 300; }
.parent { left: 155.500px; top: 136.500px; letter-spacing: -.25px; }
.util { left: 407px; top: 255px; }
.util span { line-height: 15px; border-bottom: 1px solid #d44b78; letter-spacing: -.2px; }
.order { left: 407px; top: 354px; letter-spacing: .1px; }
.arrows { position: absolute; left: 0; top: 0; }
.legend { position: absolute; left: 767px; top: 77.500px; font: 400 18.900px/23.300px "Noto Sans CJK SC", sans-serif; color: #333; white-space: nowrap; }
.legend div { display: flex; gap: 11px; }
.legend .en { font-weight: 300; font-size: 18.300px; letter-spacing: -.15px; color: #222; }
.ball { position: absolute; right: -27px; top: 557px; width: 46px; height: 46px; border-radius: 50%; background: linear-gradient(#66ca7b, #2aa94b); border: 2px solid #7ebc89; box-shadow: 0 0 2px #777; color: #fff; font-size: 11px; font-weight: 700; line-height: 41px; padding-left: 3px; }

.status { position: relative; display: flex; align-items: center; height: 23px; background: #f3f3f3; color: #444; font-size: 12px; padding: 0 0 2px 7px; }
.book { margin: 0 17px 0 19px; }
.count { width: 129px; white-space: nowrap; letter-spacing: .28px; }
.status-right { display: flex; align-items: center; position: relative; margin-left: auto; width: 459px; height: 23px; margin-bottom: -2px; padding-bottom: 2px; }
.status-right > span { margin-left: 5px; }
.note { margin-left: 19px; }
.status-right .note + span { margin: 0 17.500px 0 4px; }
.view { display: grid; place-items: center; width: 35.700px; height: 23px; margin-bottom: -2px; padding-bottom: 2px; }
.view:not(.on) svg { margin-right: 2px; }
.view.on { background: #c9c9c9; }
.ime { position: absolute; left: 1288px; top: 0; width: 191px; height: 23px; display: flex; align-items: center; gap: 6.300px; background: #fcfcfd; border-radius: 8px 0 0 8px; }
.ime b { width: 13px; color: #2672c7; font-size: 13px; margin-left: -1px; }

.taskbar { display: flex; height: 39px; background: #101010; color: #e8e8e8; }
.app { display: grid; place-items: center; width: 50px; position: relative; }
.start { width: 48px; }
.pin { width: 54px; margin-right: 1px; }
.run::after { content: ""; position: absolute; left: 5px; right: 4px; bottom: 0; height: 2px; background: #a8bbc8; }
.current { background: #333536; }
.current::after { left: 0; right: 0; }
.h-app { width: 24px; height: 23px; background: #d3281f; border: 1px solid #9b1914; color: #fff; text-align: center; font: 700 19px/21px "Liberation Sans", sans-serif; }
.office { font: 700 10px "Open Sans", sans-serif; fill: #fff; }
.ij { font: 700 9px "Liberation Mono", monospace; fill: #fff; }
.tray { display: flex; align-items: center; margin-left: auto; width: 266px; padding-bottom: 3px; }
.ch { width: 21px; font: 12px/16px "Liberation Mono", monospace; letter-spacing: -.3px; }
.up { margin-left: 26px; }
.bell { margin-left: 12px; }
.battery { margin-left: 9px; }
.net { margin-left: 7px; }
.mute { margin-left: 7px; }
.clock { display: flex; flex-direction: column; align-items: center; width: 64px; margin: 4px 0 0 19px; line-height: 18px; font-size: 13.100px; }
.peek { width: 1px; height: 39px; margin: 0 0 -3px auto; background: #555; transform: translateX(-3px); }
```
